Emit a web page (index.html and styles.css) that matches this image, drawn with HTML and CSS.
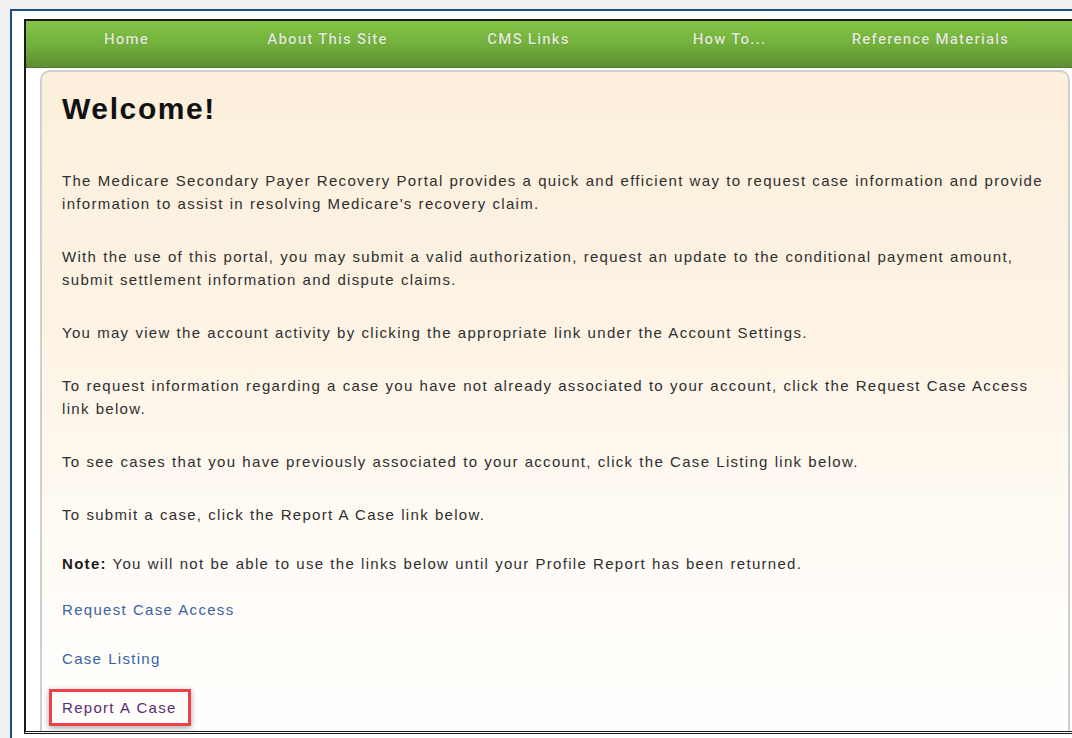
FILE: index.html
```html
<!DOCTYPE html>
<html lang="en">
<head>
<meta charset="utf-8">
<title>MSPRP - Welcome</title>
<link rel="stylesheet" href="styles.css">
</head>
<body>
<div class="window">
  <div class="frame">
    <nav class="topnav">
      <a class="nav-item" href="#">Home</a>
      <a class="nav-item" href="#">About This Site</a>
      <a class="nav-item" href="#">CMS Links</a>
      <a class="nav-item" href="#">How To...</a>
      <a class="nav-item" href="#">Reference Materials</a>
    </nav>
    <section class="panel">
      <h1 class="title">Welcome!</h1>
      <p class="copy">The Medicare Secondary Payer Recovery Portal provides a quick and efficient way to request case information and provide information to assist in resolving Medicare's recovery claim.</p>
      <p class="copy">With the use of this portal, you may submit a valid authorization, request an update to the conditional payment amount, submit settlement information and dispute claims.</p>
      <p class="copy">You may view the account activity by clicking the appropriate link under the Account Settings.</p>
      <p class="copy">To request information regarding a case you have not already associated to your account, click the Request Case Access link below.</p>
      <p class="copy">To see cases that you have previously associated to your account, click the Case Listing link below.</p>
      <p class="copy tight">To submit a case, click the Report A Case link below.</p>
      <p class="copy tighter"><strong>Note:</strong> You will not be able to use the links below until your Profile Report has been returned.</p>
      <p class="copy tight"><a class="link" href="#">Request Case Access</a></p>
      <p class="copy tight"><a class="link" href="#">Case Listing</a></p>
      <p class="copy"><a class="link visited highlight" href="#">Report A Case</a></p>
    </section>
  </div>
</div>
</body>
</html>
```

FILE: styles.css
```css
html, body {
  margin: 0;
  padding: 0;
  height: 100%;
  overflow: hidden;
}

body {
  background: #f0f0f0;
  font-family: "Liberation Sans", Arial, sans-serif;
  color: #2b2b2b;
}

.window {
  margin: 9px 0 0 10px;
  width: 1100px;
  height: 740px;
  background: #ffffff;
  border-top: 2px solid #1e4f80;
  border-left: 2px solid #1e4f80;
  padding: 8px 0 0 12px;
  box-sizing: border-box;
}

.frame {
  width: 1060px;
  height: 715px;
  box-sizing: border-box;
  border: 2px solid #1a1a1a;
  border-right: none;
  border-bottom: 3px double #1a1a1a;
  overflow: hidden;
  background: #ffffff;
}

/* green menu bar: five fixed-width cells, the remainder stays empty */
.topnav {
  display: flex;
  height: 46px;
  background: linear-gradient(#84c548 0%, #74b33d 45%, #5f8f33 100%);
  border-bottom: 1px solid #4f7a2b;
}

.nav-item {
  flex: 0 0 201px;
  display: flex;
  align-items: center;
  justify-content: center;
  padding-bottom: 10px;
  color: #e2eadb;
  font-family: Roboto, "Liberation Sans", sans-serif;
  font-weight: 500;
  font-size: 15px;
  letter-spacing: 1.2px;
  text-decoration: none;
  text-shadow: 0 0 1px rgba(60, 90, 30, 0.5);
}

.panel {
  margin: 2px 14px 0 14px;
  height: 700px;
  box-sizing: border-box;
  border: 2px solid #cfcfcf;
  border-bottom: none;
  border-radius: 10px 10px 0 0;
  background: linear-gradient(#fcefdc 0%, #fdf3e4 35%, #fffcf7 72%, #ffffff 100%);
  padding: 17px 20px 0 20px;
}

.title {
  margin: 0 0 40px 0;
  font-size: 30px;
  line-height: 40px;
  font-weight: bold;
  color: #111;
  letter-spacing: 1.6px;
}

.copy {
  margin: 0 0 30px 0;
  font-size: 15px;
  line-height: 23px;
  letter-spacing: 1.3px;
  word-spacing: 0.5px;
  color: #2e2e2e;
}

.copy.tight {
  margin-bottom: 26px;
}

.copy.tighter {
  margin-bottom: 23px;
}

.copy strong {
  color: #1a1a1a;
}

.link {
  color: #3a63a3;
  text-decoration: none;
}

.link.visited {
  color: #5a2d6e;
}

.highlight {
  display: inline-block;
  margin: -7px 0 0 -13px;
  padding: 4px 11px 4px 10px;
  border: 3px solid #ef4148;
  box-shadow: 0 2px 6px rgba(0, 0, 0, 0.35);
}
```
